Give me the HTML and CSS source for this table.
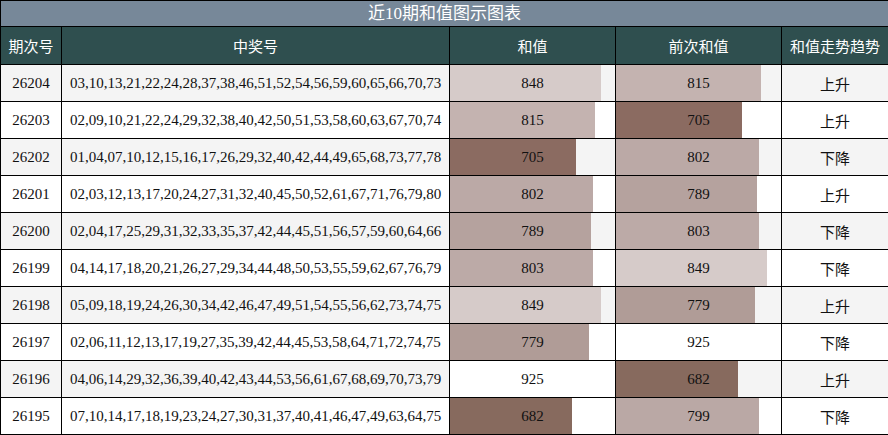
FILE: index.html
```html
<!DOCTYPE html>
<html lang="zh">
<head>
<meta charset="utf-8">
<title>近10期和值图示图表</title>
<link rel="stylesheet" href="styles.css">
</head>
<body>
<table class="chart">
  <colgroup>
    <col class="c-issue">
    <col class="c-nums">
    <col class="c-sum">
    <col class="c-sum">
    <col class="c-trend">
  </colgroup>
  <thead>
    <tr class="title-row"><th colspan="5">近10期和值图示图表</th></tr>
    <tr class="head-row">
      <th>期次号</th><th>中奖号</th><th>和值</th><th>前次和值</th><th>和值走势趋势</th>
    </tr>
  </thead>
  <tbody>
    <tr class="alt">
      <td>26204</td><td>03,10,13,21,22,24,28,37,38,46,51,52,54,56,59,60,65,66,70,73</td>
      <td class="bar-cell"><div class="bar-wrap"><div class="bar" style="width:91.68%;background:#d6cbc9"></div><span class="val">848</span></div></td>
      <td class="bar-cell"><div class="bar-wrap"><div class="bar" style="width:88.11%;background:#c4b3b0"></div><span class="val">815</span></div></td>
      <td class="trend">上升</td>
    </tr>
    <tr>
      <td>26203</td><td>02,09,10,21,22,24,29,32,38,40,42,50,51,53,58,60,63,67,70,74</td>
      <td class="bar-cell"><div class="bar-wrap"><div class="bar" style="width:88.11%;background:#c4b3b0"></div><span class="val">815</span></div></td>
      <td class="bar-cell"><div class="bar-wrap"><div class="bar" style="width:76.22%;background:#8b6b61"></div><span class="val">705</span></div></td>
      <td class="trend">上升</td>
    </tr>
    <tr class="alt">
      <td>26202</td><td>01,04,07,10,12,15,16,17,26,29,32,40,42,44,49,65,68,73,77,78</td>
      <td class="bar-cell"><div class="bar-wrap"><div class="bar" style="width:76.22%;background:#8b6b61"></div><span class="val">705</span></div></td>
      <td class="bar-cell"><div class="bar-wrap"><div class="bar" style="width:86.70%;background:#bba9a6"></div><span class="val">802</span></div></td>
      <td class="trend">下降</td>
    </tr>
    <tr>
      <td>26201</td><td>02,03,12,13,17,20,24,27,31,32,40,45,50,52,61,67,71,76,79,80</td>
      <td class="bar-cell"><div class="bar-wrap"><div class="bar" style="width:86.70%;background:#bba9a6"></div><span class="val">802</span></div></td>
      <td class="bar-cell"><div class="bar-wrap"><div class="bar" style="width:85.30%;background:#b5a29e"></div><span class="val">789</span></div></td>
      <td class="trend">上升</td>
    </tr>
    <tr class="alt">
      <td>26200</td><td>02,04,17,25,29,31,32,33,35,37,42,44,45,51,56,57,59,60,64,66</td>
      <td class="bar-cell"><div class="bar-wrap"><div class="bar" style="width:85.30%;background:#b5a29e"></div><span class="val">789</span></div></td>
      <td class="bar-cell"><div class="bar-wrap"><div class="bar" style="width:86.81%;background:#bcaaa7"></div><span class="val">803</span></div></td>
      <td class="trend">下降</td>
    </tr>
    <tr>
      <td>26199</td><td>04,14,17,18,20,21,26,27,29,34,44,48,50,53,55,59,62,67,76,79</td>
      <td class="bar-cell"><div class="bar-wrap"><div class="bar" style="width:86.81%;background:#bcaaa7"></div><span class="val">803</span></div></td>
      <td class="bar-cell"><div class="bar-wrap"><div class="bar" style="width:91.78%;background:#d6cbc9"></div><span class="val">849</span></div></td>
      <td class="trend">下降</td>
    </tr>
    <tr class="alt">
      <td>26198</td><td>05,09,18,19,24,26,30,34,42,46,47,49,51,54,55,56,62,73,74,75</td>
      <td class="bar-cell"><div class="bar-wrap"><div class="bar" style="width:91.78%;background:#d6cbc9"></div><span class="val">849</span></div></td>
      <td class="bar-cell"><div class="bar-wrap"><div class="bar" style="width:84.22%;background:#b09c97"></div><span class="val">779</span></div></td>
      <td class="trend">上升</td>
    </tr>
    <tr>
      <td>26197</td><td>02,06,11,12,13,17,19,27,35,39,42,44,45,53,58,64,71,72,74,75</td>
      <td class="bar-cell"><div class="bar-wrap"><div class="bar" style="width:84.22%;background:#b09c97"></div><span class="val">779</span></div></td>
      <td class="bar-cell"><div class="bar-wrap"><div class="bar" style="width:100%;background:#ffffff"></div><span class="val">925</span></div></td>
      <td class="trend">下降</td>
    </tr>
    <tr class="alt">
      <td>26196</td><td>04,06,14,29,32,36,39,40,42,43,44,53,56,61,67,68,69,70,73,79</td>
      <td class="bar-cell"><div class="bar-wrap"><div class="bar" style="width:100%;background:#ffffff"></div><span class="val">925</span></div></td>
      <td class="bar-cell"><div class="bar-wrap"><div class="bar" style="width:73.73%;background:#876a5e"></div><span class="val">682</span></div></td>
      <td class="trend">上升</td>
    </tr>
    <tr>
      <td>26195</td><td>07,10,14,17,18,19,23,24,27,30,31,37,40,41,46,47,49,63,64,75</td>
      <td class="bar-cell"><div class="bar-wrap"><div class="bar" style="width:73.73%;background:#876a5e"></div><span class="val">682</span></div></td>
      <td class="bar-cell"><div class="bar-wrap"><div class="bar" style="width:86.38%;background:#baa8a5"></div><span class="val">799</span></div></td>
      <td class="trend">下降</td>
    </tr>
  </tbody>
</table>
</body>
</html>
```

FILE: styles.css
```css
html, body {
  margin: 0;
  padding: 0;
  background: #ffffff;
}

.chart {
  width: 888px;
  table-layout: fixed;
  border-collapse: collapse;
  font-family: "Liberation Serif", "Noto Sans CJK SC", serif;
  font-size: 15px;
  color: #111111;
}

.c-issue { width: 61px; }
.c-nums { width: 388px; }
.c-sum { width: 166px; }
.c-trend { width: 107px; }

.chart th,
.chart td {
  border: 1px solid #000000;
  padding: 0;
  text-align: center;
  white-space: nowrap;
  overflow: hidden;
}

.title-row th {
  height: 25px;
  background: #778899;
  color: #ffffff;
  font-weight: normal;
  font-size: 17px;
  line-height: 25px;
}

.head-row th {
  height: 37px;
  background: #2f4f4f;
  color: #ffffff;
  font-weight: normal;
  font-size: 15px;
}

.chart tbody td {
  height: 36px;
  background: #ffffff;
}

.chart tbody tr.alt td {
  background: #f4f4f4;
}

.trend {
  font-family: "Noto Sans CJK SC", sans-serif;
}

.bar-wrap {
  display: grid;
  height: 36px;
}

.bar-wrap > * {
  grid-area: 1 / 1;
}

.bar {
  height: 100%;
}

.val {
  align-self: center;
  justify-self: center;
  line-height: 36px;
}
```
